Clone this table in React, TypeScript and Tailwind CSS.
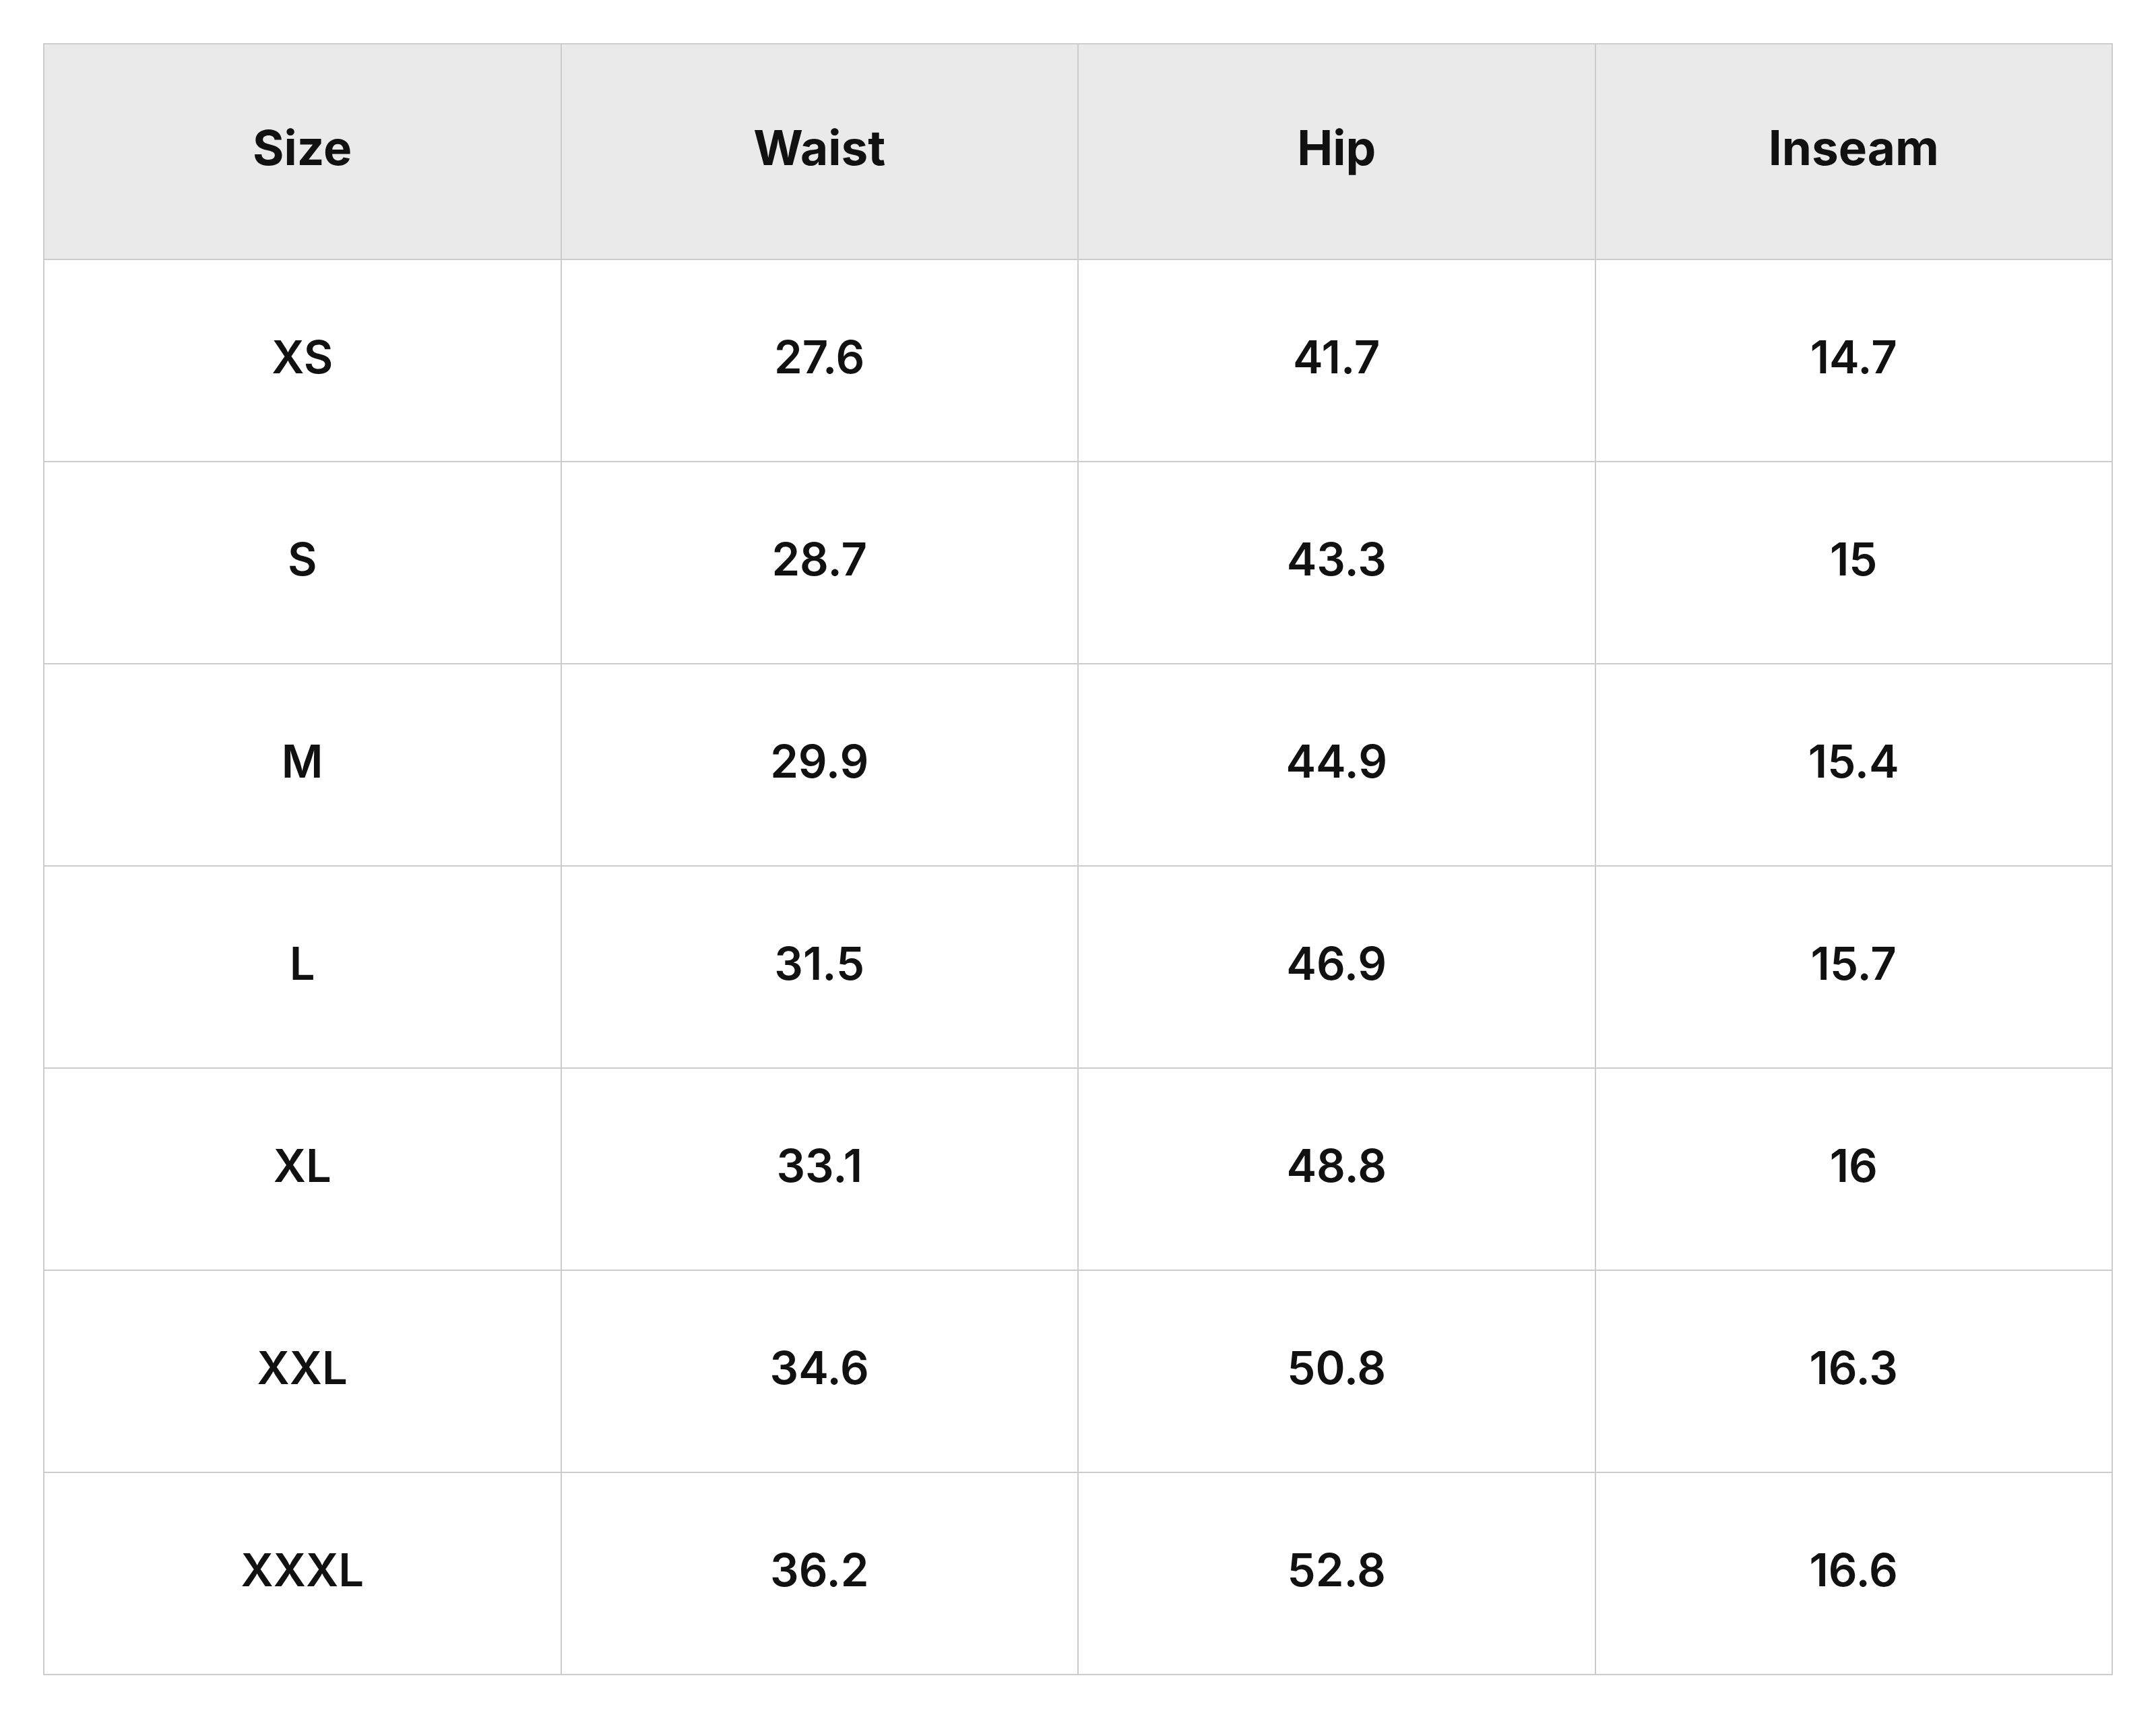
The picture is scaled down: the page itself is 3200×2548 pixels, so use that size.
const headers = ["Size", "Waist", "Hip", "Inseam"];

const rows: [string, string, string, string][] = [
  ["XS", "27.6", "41.7", "14.7"],
  ["S", "28.7", "43.3", "15"],
  ["M", "29.9", "44.9", "15.4"],
  ["L", "31.5", "46.9", "15.7"],
  ["XL", "33.1", "48.8", "16"],
  ["XXL", "34.6", "50.8", "16.3"],
  ["XXXL", "36.2", "52.8", "16.6"],
];

export default function App() {
  return (
    <div className="min-h-screen bg-white px-[64px] pt-[64px] font-['Inter','Noto_Sans',sans-serif] text-[#111111]">
      <table className="w-full table-fixed border-collapse border-2 border-[#cccccc]">
        <thead>
          <tr className="h-[320px] bg-[#eaeaea]">
            {headers.map((h) => (
              <th key={h} className="border-2 border-[#cccccc] pb-[12px] text-center align-middle text-[71px] font-bold leading-none">
                {h}
              </th>
            ))}
          </tr>
        </thead>
        <tbody>
          {rows.map((r) => (
            <tr key={r[0]} className="h-[300px]">
              {r.map((v, i) => (
                <td key={i} className="border-2 border-[#cccccc] pb-[12px] text-center align-middle text-[67px] font-semibold leading-none">
                  {v}
                </td>
              ))}
            </tr>
          ))}
        </tbody>
      </table>
    </div>
  );
}
